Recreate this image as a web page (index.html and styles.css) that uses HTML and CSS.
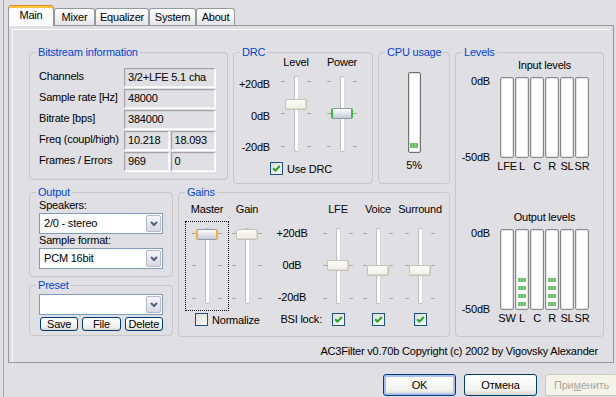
FILE: index.html
```html
<!DOCTYPE html>
<html>
   <head>
      <meta charset="utf-8">
      <title>AC3Filter</title>
      <link rel="stylesheet" href="styles.css">
   </head>
   <body>
      <div class="frame">
         <div class="tabs">
            <div class="tab active">Main</div>
            <div class="tab tab-mixer">Mixer</div>
            <div class="tab tab-eq">Equalizer</div>
            <div class="tab tab-system">System</div>
            <div class="tab tab-about">About</div>
         </div>
         <div class="panel">
            <div class="page">
               <div class="layout">
                  <div class="left-area">
                     <div class="top-row">
                        <div class="group bitstream">
                           <span class="group-title">Bitstream information</span>
                           <div class="info-grid">
                              <span class="info-label">Channels</span>
                              <span class="value">3/2+LFE 5.1 cha</span>
                              <span class="info-label">Sample rate [Hz]</span>
                              <span class="value">48000</span>
                              <span class="info-label">Bitrate [bps]</span>
                              <span class="value">384000</span>
                              <span class="info-label">Freq (coupl/high)</span>
                              <div class="pair"><span class="value">10.218</span><span class="value">18.093</span></div>
                              <span class="info-label">Frames / Errors</span>
                              <div class="pair"><span class="value">969</span><span class="value">0</span></div>
                           </div>
                        </div>

                        <div class="group drc">
                           <span class="group-title">DRC</span>
                           <div class="drc-grid">
                              <span></span>
                              <span class="col-head">Level</span>
                              <span class="col-head">Power</span>
                              <div class="scale scale-drc"><span>+20dB</span><span>0dB</span><span>-20dB</span></div>
                              <div class="slider"><div class="track"></div><div class="thumb" style="top:23px"></div></div>
                              <div class="slider"><div class="track"></div><div class="thumb hot green" style="top:32px"></div></div>
                              <div class="checkline drc-check">
                                 <span class="check"><svg width="9" height="9" viewBox="0 0 9 9"><path d="M1.2 4.2 L3.4 6.6 L7.8 2" fill="none" stroke="#21a121" stroke-width="2"/></svg></span>
                                 Use DRC
                              </div>
                           </div>
                        </div>

                        <div class="group cpu">
                           <span class="group-title">CPU usage</span>
                           <div class="cpu-body">
                              <div class="cpu-bar"><div class="cpu-fill"></div></div>
                              <span class="cpu-value">5%</span>
                           </div>
                        </div>
                     </div>

                     <div class="bottom-row">
                        <div class="left-col">
                           <div class="group output">
                              <span class="group-title">Output</span>
                              <div class="output-body">
                                 <span class="field-label">Speakers:</span>
                                 <div class="combo">
                                    <span class="combo-text">2/0 - stereo</span>
                                    <span class="combo-btn"><svg width="8" height="6" viewBox="0 0 8 6"><path d="M1 1 L4 4 L7 1" fill="none" stroke="#4d6185" stroke-width="2"/></svg></span>
                                 </div>
                                 <span class="field-label">Sample format:</span>
                                 <div class="combo">
                                    <span class="combo-text">PCM 16bit</span>
                                    <span class="combo-btn"><svg width="8" height="6" viewBox="0 0 8 6"><path d="M1 1 L4 4 L7 1" fill="none" stroke="#4d6185" stroke-width="2"/></svg></span>
                                 </div>
                              </div>
                           </div>
                           <div class="group preset">
                              <span class="group-title">Preset</span>
                              <div class="preset-body">
                                 <div class="combo">
                                    <span class="combo-text"></span>
                                    <span class="combo-btn"><svg width="8" height="6" viewBox="0 0 8 6"><path d="M1 1 L4 4 L7 1" fill="none" stroke="#4d6185" stroke-width="2"/></svg></span>
                                 </div>
                                 <div class="preset-buttons">
                                    <button class="sbtn">Save</button>
                                    <button class="sbtn">File</button>
                                    <button class="sbtn">Delete</button>
                                 </div>
                              </div>
                           </div>
                        </div>

                        <div class="group gains">
                           <span class="group-title">Gains</span>
                           <div class="gains-grid">
                              <span class="col-head">Master</span>
                              <span class="col-head">Gain</span>
                              <span></span>
                              <span class="col-head">LFE</span>
                              <span class="col-head">Voice</span>
                              <span class="col-head">Surround</span>

                              <div class="slider focused"><div class="track"></div><div class="thumb hot orange" style="top:1px"></div></div>
                              <div class="slider"><div class="track"></div><div class="thumb" style="top:1px"></div></div>
                              <div class="scale scale-gains"><span>+20dB</span><span>0dB</span><span>-20dB</span></div>
                              <div class="slider"><div class="track"></div><div class="thumb" style="top:32px"></div></div>
                              <div class="slider"><div class="track"></div><div class="thumb" style="top:37px"></div></div>
                              <div class="slider"><div class="track"></div><div class="thumb" style="top:37px"></div></div>

                              <div class="checkline normalize">
                                 <span class="check"></span>
                                 Normalize
                              </div>
                              <span class="bsi">BSI lock:</span>
                              <span class="check"><svg width="9" height="9" viewBox="0 0 9 9"><path d="M1.2 4.2 L3.4 6.6 L7.8 2" fill="none" stroke="#21a121" stroke-width="2"/></svg></span>
                              <span class="check"><svg width="9" height="9" viewBox="0 0 9 9"><path d="M1.2 4.2 L3.4 6.6 L7.8 2" fill="none" stroke="#21a121" stroke-width="2"/></svg></span>
                              <span class="check"><svg width="9" height="9" viewBox="0 0 9 9"><path d="M1.2 4.2 L3.4 6.6 L7.8 2" fill="none" stroke="#21a121" stroke-width="2"/></svg></span>
                           </div>
                        </div>
                     </div>
                  </div>

                  <div class="group levels">
                     <span class="group-title">Levels</span>
                     <div class="levels-body">
                        <div class="meter">
                           <span class="meter-title">Input levels</span>
                           <div class="meter-scale"><span>0dB</span><span>-50dB</span></div>
                           <div class="bars">
                              <div class="bar"></div>
                              <div class="bar"></div>
                              <div class="bar"></div>
                              <div class="bar"></div>
                              <div class="bar"></div>
                              <div class="bar"></div>
                           </div>
                           <div class="bar-labels"><span>LFE</span><span>L</span><span>C</span><span>R</span><span>SL</span><span>SR</span></div>
                        </div>
                        <div class="meter">
                           <span class="meter-title">Output levels</span>
                           <div class="meter-scale"><span>0dB</span><span>-50dB</span></div>
                           <div class="bars">
                              <div class="bar"></div>
                              <div class="bar"><i class="seg"></i><i class="seg"></i><i class="seg"></i><i class="seg"></i></div>
                              <div class="bar"></div>
                              <div class="bar"><i class="seg"></i><i class="seg"></i><i class="seg"></i><i class="seg"></i></div>
                              <div class="bar"></div>
                              <div class="bar"></div>
                           </div>
                           <div class="bar-labels"><span>SW</span><span>L</span><span>C</span><span>R</span><span>SL</span><span>SR</span></div>
                        </div>
                     </div>
                  </div>
               </div>
               <div class="footer">AC3Filter v0.70b Copyright (c) 2002 by Vigovsky Alexander</div>
            </div>
         </div>
         <div class="actions">
            <button class="btn default">OK</button>
            <button class="btn">Отмена</button>
            <button class="btn disabled">При<u>м</u>енить</button>
         </div>
      </div>
   </body>
</html>
```

FILE: styles.css
```css
*{
   box-sizing: border-box;
}
body{
   margin: 0;
   width: 616px;
   height: 397px;
   overflow: hidden;
   background: #e0dfe3;
   font: 11px "Liberation Sans", Arial, sans-serif;
   letter-spacing: -0.2px;
   color: #000;
}
button{
   font: inherit;
   letter-spacing: inherit;
   color: inherit;
   padding: 0;
}

/* window frame + tabs */
.frame{
   margin-left: 3px;
   height: 397px;
   border-left: 1px solid #a5a4a8;
}
.tabs{
   display: flex;
   align-items: flex-end;
   height: 25px;
   padding-left: 4px;
}
.tab{
   height: 17px;
   line-height: 17px;
   text-align: center;
   border: 1px solid #919b9c;
   border-bottom: 0;
   border-radius: 3px 3px 0 0;
   background: linear-gradient(#ffffff, #f3f3f5 55%, #e3e3e9);
}
.tab.active{
   position: relative;
   z-index: 1;
   width: 46px;
   height: 21px;
   margin-bottom: -1px;
   line-height: 19px;
   background: #fcfcfe;
   border-top-color: #e68b2c;
   box-shadow: inset 0 2px 0 #ffc83c;
}
.tab-mixer{ width: 41px; }
.tab-eq{ width: 54px; }
.tab-system{ width: 47px; }
.tab-about{ width: 39px; }

.panel{
   margin-left: 4px;
   width: 606px;
   height: 338px;
   border: 1px solid #919b9c;
   padding: 3px 3px 0;
}
.page{
   height: 100%;
   border-top: 1px solid #fbfbfc;
   border-left: 1px solid #fbfbfc;
   padding: 22px 0 0 16px;
}

/* layout */
.layout{
   display: flex;
   align-items: flex-start;
   gap: 5px;
}
.left-area{
   width: 421px;
}
.top-row{
   display: flex;
   align-items: flex-start;
   gap: 5px;
}
.bottom-row{
   display: flex;
   align-items: flex-start;
   gap: 5px;
   margin-top: 8px;
}
.left-col{
   width: 144px;
   display: flex;
   flex-direction: column;
   gap: 8px;
}

/* group boxes */
.group{
   position: relative;
   border: 1px solid #c6c6cb;
   border-radius: 4px;
}
.group-title{
   position: absolute;
   top: -7px;
   left: 6px;
   padding: 0 2px;
   line-height: 13px;
   background: #e0dfe3;
   color: #0046d5;
   white-space: nowrap;
}
.bitstream{ width: 199px; height: 128px; }
.drc{ width: 140px; height: 132px; }
.cpu{ width: 72px; height: 132px; }
.output{ height: 85px; }
.preset{ height: 51px; }
.gains{ width: 272px; height: 145px; }
.levels{ width: 149px; height: 285px; }

/* bitstream */
.info-grid{
   display: grid;
   grid-template-columns: 85px 91px;
   grid-auto-rows: 19px;
   row-gap: 2px;
   padding: 15px 0 0 9px;
}
.info-label{
   line-height: 17px;
   white-space: nowrap;
}
.value{
   display: block;
   height: 19px;
   padding-left: 3px;
   line-height: 17px;
   white-space: nowrap;
   overflow: hidden;
   border: 1px solid;
   border-color: #a3a2a7 #f4f4f6 #f4f4f6 #a3a2a7;
   box-shadow: 1px 1px 0 #fff, inset 1px 1px 0 #d3d2d6;
}
.pair{
   display: grid;
   grid-template-columns: 1fr 1fr;
   gap: 2px;
}

/* sliders */
.slider{
   --tick: linear-gradient(#a6a6a6, #a6a6a6);
   position: relative;
   width: 30px;
   height: 76px;
   background:
      var(--tick) left 0 top 5px / 4px 1px no-repeat,
      var(--tick) right 0 top 5px / 4px 1px no-repeat,
      var(--tick) left 0 top 37px / 4px 1px no-repeat,
      var(--tick) right 0 top 37px / 4px 1px no-repeat,
      var(--tick) left 0 top 70px / 4px 1px no-repeat,
      var(--tick) right 0 top 70px / 4px 1px no-repeat;
}
.track{
   width: 5px;
   height: 100%;
   margin: 0 auto;
   background: #fff;
   border: 1px solid #bdbcc1;
   border-right-color: #d9d9dc;
   border-radius: 2px;
}
.thumb{
   position: absolute;
   left: 4px;
   width: 22px;
   height: 11px;
   border: 1px solid #c4c2b6;
   border-radius: 2px;
   background: linear-gradient(#fcfcf8, #efeee4);
   box-shadow: inset -1px -1px 0 #dddbcf;
}
.thumb.hot{
   border-color: #8e99ae;
   border-left: 2px solid var(--hot);
   border-right: 2px solid var(--hot);
   background: linear-gradient(#fbfcfd, #e3e7ee 45%, #c3cad8);
   box-shadow: none;
}
.thumb.green{ --hot: #3cbb3c; }
.thumb.orange{ --hot: #f6b036; }
.slider.focused{
   outline: 1px dotted #000;
   outline-offset: 6px;
}
.scale{
   display: flex;
   flex-direction: column;
   justify-content: space-between;
   line-height: 12px;
   white-space: nowrap;
}
.col-head{
   line-height: 13px;
   white-space: nowrap;
}

/* checkboxes */
.check{
   display: flex;
   align-items: center;
   justify-content: center;
   width: 13px;
   height: 13px;
   border: 1px solid #1c5180;
   background: linear-gradient(135deg, #dcdcd7, #fbfbf9);
}
.checkline{
   display: flex;
   align-items: center;
   gap: 4px;
   white-space: nowrap;
}

/* DRC */
.drc-grid{
   display: grid;
   grid-template-columns: 37px 50px 42px;
   grid-template-rows: 20px 86px 13px;
   justify-items: center;
   padding-top: 3px;
}
.scale-drc{
   justify-self: end;
   align-items: flex-end;
   height: 75px;
   margin-top: 2px;
   padding-right: 1px;
}
.drc-check{
   grid-column: 1 / -1;
   justify-self: start;
   padding-left: 36px;
}

/* CPU */
.cpu-body{
   display: flex;
   flex-direction: column;
   align-items: center;
   padding-top: 19px;
}
.cpu-bar{
   display: flex;
   flex-direction: column;
   justify-content: flex-end;
   align-items: center;
   width: 13px;
   height: 81px;
   padding-bottom: 4px;
   background: #fff;
   border: 1px solid #707070;
   border-radius: 2px;
   box-shadow: inset 0 0 0 1px #e3e3e3;
}
.cpu-fill{
   width: 8px;
   height: 5px;
   background: repeating-linear-gradient(90deg, #6cbd6c 0 2px, #8fd08f 2px 3px);
}
.cpu-value{
   margin-top: 6px;
   line-height: 13px;
}

/* output + preset */
.output-body{
   display: flex;
   flex-direction: column;
   padding: 6px 0 0 9px;
}
.field-label{
   line-height: 13px;
}
.combo{
   display: flex;
   width: 124px;
   height: 21px;
   margin-top: 1px;
   background: #fff;
   border: 1px solid #7f9db9;
}
.combo-text{
   flex: 1;
   padding-left: 4px;
   line-height: 19px;
   white-space: nowrap;
   overflow: hidden;
}
.combo-btn{
   display: flex;
   align-items: center;
   justify-content: center;
   width: 15px;
   margin: 1px;
   border: 1px solid #b7b8c8;
   border-radius: 2px;
   background: linear-gradient(#f6f6f9, #d8d9e2);
}
.preset-body{
   padding: 7px 0 0 9px;
}
.preset-buttons{
   display: grid;
   grid-template-columns: 1fr 1fr 1fr;
   gap: 4px;
   width: 124px;
   margin-top: 2px;
   padding-left: 1px;
}
.sbtn{
   height: 14px;
   line-height: 12px;
   border: 1px solid #003c74;
   border-radius: 3px;
   background: linear-gradient(#ffffff, #eeede8 80%, #d8d3c8);
}

/* gains */
.gains-grid{
   display: grid;
   grid-template-columns: 40px 40px 50px 42px 38px 46px;
   grid-template-rows: 25px 85px 13px;
   justify-items: center;
   padding: 10px 0 0 8px;
}
.scale-gains{
   align-items: center;
   height: 76px;
   margin-top: -1px;
}
.normalize{
   grid-column: 1 / 3;
   justify-self: start;
   margin-left: 8px;
}
.bsi{
   justify-self: end;
   margin-right: -5px;
   line-height: 13px;
   white-space: nowrap;
}

/* levels */
.levels-body{
   padding-top: 6px;
}
.meter{
   display: grid;
   grid-template-columns: 34px 89px;
   column-gap: 10px;
   align-content: start;
   height: 152px;
}
.meter-title{
   grid-column: 2;
   text-align: center;
   line-height: 13px;
   white-space: nowrap;
}
.meter-scale{
   grid-column: 1;
   display: flex;
   flex-direction: column;
   justify-content: space-between;
   align-items: flex-end;
   margin: 3px 0 -6px;
   line-height: 13px;
}
.bars{
   display: flex;
   gap: 1px;
   margin-top: 5px;
}
.bar{
   display: flex;
   flex-direction: column;
   justify-content: flex-end;
   align-items: center;
   gap: 4px;
   width: 14px;
   height: 81px;
   padding-bottom: 3px;
   background: #fff;
   border: 1px solid #8a8a8a;
   border-radius: 2px;
   box-shadow: inset 0 0 0 1px #e4e4e4;
}
.seg{
   display: block;
   width: 8px;
   height: 4px;
   background: repeating-linear-gradient(90deg, #6cbd6c 0 2px, #8fd08f 2px 3px);
}
.bar-labels{
   grid-column: 2;
   display: grid;
   grid-template-columns: repeat(6, 14px);
   column-gap: 1px;
   justify-items: center;
   margin-top: 2px;
   line-height: 13px;
   white-space: nowrap;
}

.footer{
   margin-top: 8px;
   padding-right: 12px;
   text-align: right;
   line-height: 13px;
   white-space: nowrap;
}

/* dialog buttons */
.actions{
   display: flex;
   gap: 8px;
   margin-top: 11px;
   padding-left: 379px;
}
.btn{
   flex: none;
   width: 73px;
   height: 22px;
   border: 1px solid #003c74;
   border-radius: 3px;
   background: linear-gradient(#ffffff, #f2f2ee 75%, #d9d5cb);
}
.btn.default{
   box-shadow: inset 0 0 0 2px #a9c0f3;
}
.btn.disabled{
   color: #aca899;
   border-color: #c9c7ba;
   background: #f5f4ea;
}
```
